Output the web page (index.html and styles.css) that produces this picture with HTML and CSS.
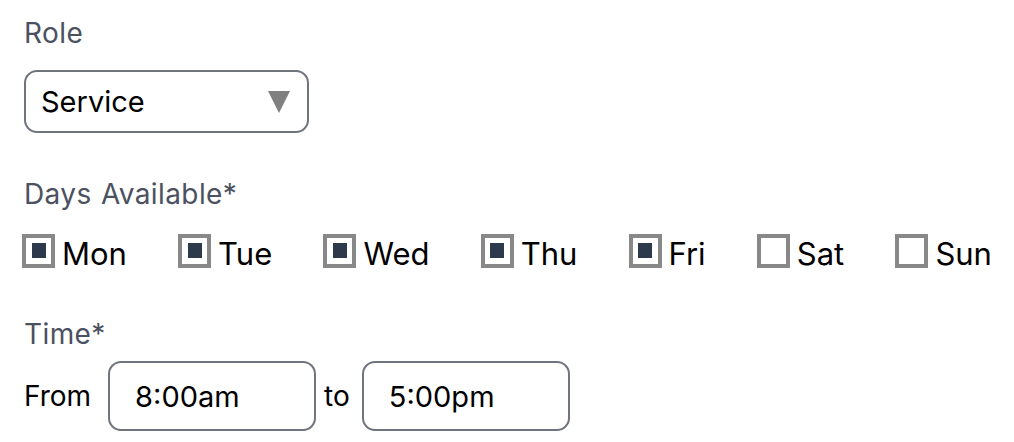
FILE: index.html
```html
<!DOCTYPE html>
<html lang="en">
  <head>
    <meta charset="UTF-8" />
    <meta name="viewport" content="width=device-width, initial-scale=1.0" />
    <title>Availability</title>
    <link rel="stylesheet" href="styles.css">
  </head>
  <body>
    <form class="availability-form">
      <label class="field-label" for="role">Role</label>
      <div class="select-box">
        <select id="role">
          <option>Service</option>
          <option>Kitchen</option>
          <option>Bar</option>
        </select>
        <span class="select-arrow"></span>
      </div>

      <p class="field-label">Days Available*</p>
      <div class="days">
        <label class="day"><input type="checkbox" checked /><span>Mon</span></label>
        <label class="day"><input type="checkbox" checked /><span>Tue</span></label>
        <label class="day"><input type="checkbox" checked /><span>Wed</span></label>
        <label class="day"><input type="checkbox" checked /><span>Thu</span></label>
        <label class="day"><input type="checkbox" checked /><span>Fri</span></label>
        <label class="day"><input type="checkbox" /><span>Sat</span></label>
        <label class="day"><input type="checkbox" /><span>Sun</span></label>
      </div>

      <p class="field-label">Time*</p>
      <div class="time-row">
        <span class="time-word from">From</span>
        <input class="time-input" type="text" value="8:00am" />
        <span class="time-word to">to</span>
        <input class="time-input" type="text" value="5:00pm" />
      </div>
    </form>
  </body>
</html>
```

FILE: styles.css
```css
* {
  margin: 0;
  padding: 0;
  box-sizing: border-box;
  font-family: Inter, "Liberation Sans", Arial, sans-serif;
}
body {
  background: white;
  color: black;
}
.availability-form {
  display: flex;
  flex-direction: column;
  align-items: flex-start;
  padding: 13px 22px 0 24px;
}
.field-label {
  display: block;
  font-size: 28px;
  line-height: 40px;
  letter-spacing: 0.4px;
  word-spacing: 1px;
  color: #4b5160;
}
.select-box {
  display: flex;
  align-items: center;
  width: 285px;
  height: 63px;
  margin-top: 17px;
  margin-bottom: 41px;
  padding: 0 17px 0 15px;
  border: 2px solid #70747e;
  border-radius: 13px;
}
.select-box select {
  flex: 1;
  appearance: none;
  -webkit-appearance: none;
  border: none;
  outline: none;
  background: transparent;
  font-size: 29px;
  color: black;
}
.select-arrow {
  width: 0;
  height: 0;
  border-left: 11px solid transparent;
  border-right: 11px solid transparent;
  border-top: 22px solid #808080;
}
.days {
  display: flex;
  justify-content: space-between;
  align-self: stretch;
  margin: 16px 0 43px -2px;
}
.day {
  display: flex;
  align-items: center;
  gap: 7px;
  font-size: 31px;
  line-height: 34px;
  color: black;
}
.day span {
  padding-top: 7px;
}
.day input {
  appearance: none;
  -webkit-appearance: none;
  display: flex;
  align-items: center;
  justify-content: center;
  width: 33px;
  height: 34px;
  border: 4px solid #888888;
  background: white;
}
.day input:checked::after {
  content: "";
  width: 14px;
  height: 15px;
  background: #2d3a4b;
}
.time-row {
  display: flex;
  align-items: center;
  margin-top: 7px;
  font-size: 28px;
}
.time-word.from {
  margin-right: 17px;
}
.time-word.to {
  margin: 0 12px 0 8px;
}
.time-input {
  width: 208px;
  height: 70px;
  padding-left: 25px;
  border: 2px solid #70747e;
  border-radius: 13px;
  font-size: 29px;
  color: black;
  outline: none;
}
```
